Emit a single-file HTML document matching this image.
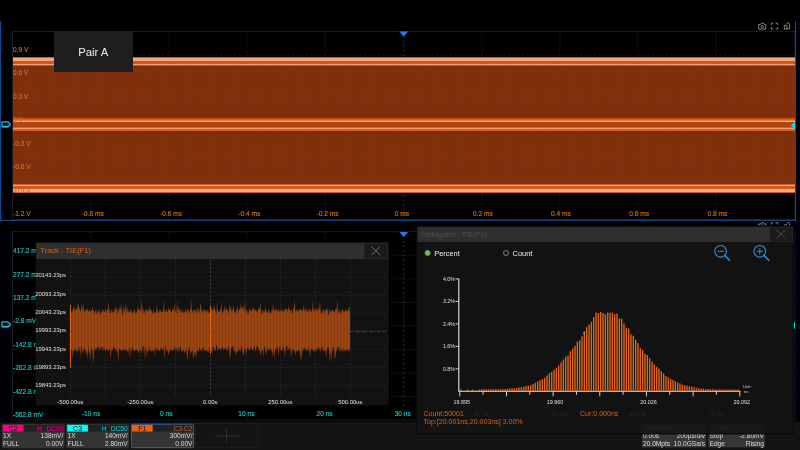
<!DOCTYPE html>
<html><head><meta charset="utf-8"><title>Oscilloscope</title>
<style>
html,body{margin:0;padding:0;background:#000;overflow:hidden}
svg{display:block;will-change:transform;opacity:0.999}
text{font-family:"Liberation Sans",sans-serif}
</style></head><body>
<svg width="800" height="450" viewBox="0 0 800 450">
<rect width="800" height="450" fill="#000"/>

<g id="top">
<rect x="1" y="31.5" width="11.5" height="189" fill="#010109"/>
<rect x="796" y="21" width="4" height="401" fill="#01010b"/>
<rect x="12.5" y="31.5" width="782.5" height="188" fill="none" stroke="#1d1d1d" stroke-width="1"/>
<line x1="13" x2="795" y1="55.0" y2="55.0" stroke="#191919" stroke-width="1" stroke-dasharray="2.5 2"/>
<line x1="13" x2="795" y1="78.5" y2="78.5" stroke="#191919" stroke-width="1" stroke-dasharray="2.5 2"/>
<line x1="13" x2="795" y1="102.0" y2="102.0" stroke="#191919" stroke-width="1" stroke-dasharray="2.5 2"/>
<line x1="13" x2="795" y1="125.5" y2="125.5" stroke="#191919" stroke-width="1" stroke-dasharray="2.5 2"/>
<line x1="13" x2="795" y1="149.0" y2="149.0" stroke="#191919" stroke-width="1" stroke-dasharray="2.5 2"/>
<line x1="13" x2="795" y1="172.5" y2="172.5" stroke="#191919" stroke-width="1" stroke-dasharray="2.5 2"/>
<line x1="13" x2="795" y1="196.0" y2="196.0" stroke="#191919" stroke-width="1" stroke-dasharray="2.5 2"/>
<line y1="32" y2="219" x1="90.7" x2="90.7" stroke="#191919" stroke-width="1" stroke-dasharray="2.5 2"/>
<line y1="32" y2="219" x1="168.9" x2="168.9" stroke="#191919" stroke-width="1" stroke-dasharray="2.5 2"/>
<line y1="32" y2="219" x1="247.1" x2="247.1" stroke="#191919" stroke-width="1" stroke-dasharray="2.5 2"/>
<line y1="32" y2="219" x1="325.3" x2="325.3" stroke="#191919" stroke-width="1" stroke-dasharray="2.5 2"/>
<line y1="32" y2="219" x1="403.5" x2="403.5" stroke="#191919" stroke-width="1" stroke-dasharray="2.5 2"/>
<line y1="32" y2="219" x1="481.7" x2="481.7" stroke="#191919" stroke-width="1" stroke-dasharray="2.5 2"/>
<line y1="32" y2="219" x1="559.9" x2="559.9" stroke="#191919" stroke-width="1" stroke-dasharray="2.5 2"/>
<line y1="32" y2="219" x1="638.1" x2="638.1" stroke="#191919" stroke-width="1" stroke-dasharray="2.5 2"/>
<line y1="32" y2="219" x1="716.3" x2="716.3" stroke="#191919" stroke-width="1" stroke-dasharray="2.5 2"/>
<line x1="402.7" x2="404.7" y1="31.5" y2="31.5" stroke="#303030" stroke-width="0.8"/>
<line x1="402.7" x2="404.7" y1="36.2" y2="36.2" stroke="#303030" stroke-width="0.8"/>
<line x1="402.7" x2="404.7" y1="40.9" y2="40.9" stroke="#303030" stroke-width="0.8"/>
<line x1="402.7" x2="404.7" y1="45.6" y2="45.6" stroke="#303030" stroke-width="0.8"/>
<line x1="402.7" x2="404.7" y1="50.3" y2="50.3" stroke="#303030" stroke-width="0.8"/>
<line x1="402.7" x2="404.7" y1="55.0" y2="55.0" stroke="#303030" stroke-width="0.8"/>
<line x1="402.7" x2="404.7" y1="59.7" y2="59.7" stroke="#303030" stroke-width="0.8"/>
<line x1="402.7" x2="404.7" y1="64.4" y2="64.4" stroke="#303030" stroke-width="0.8"/>
<line x1="402.7" x2="404.7" y1="69.1" y2="69.1" stroke="#303030" stroke-width="0.8"/>
<line x1="402.7" x2="404.7" y1="73.8" y2="73.8" stroke="#303030" stroke-width="0.8"/>
<line x1="402.7" x2="404.7" y1="78.5" y2="78.5" stroke="#303030" stroke-width="0.8"/>
<line x1="402.7" x2="404.7" y1="83.2" y2="83.2" stroke="#303030" stroke-width="0.8"/>
<line x1="402.7" x2="404.7" y1="87.9" y2="87.9" stroke="#303030" stroke-width="0.8"/>
<line x1="402.7" x2="404.7" y1="92.6" y2="92.6" stroke="#303030" stroke-width="0.8"/>
<line x1="402.7" x2="404.7" y1="97.3" y2="97.3" stroke="#303030" stroke-width="0.8"/>
<line x1="402.7" x2="404.7" y1="102.0" y2="102.0" stroke="#303030" stroke-width="0.8"/>
<line x1="402.7" x2="404.7" y1="106.7" y2="106.7" stroke="#303030" stroke-width="0.8"/>
<line x1="402.7" x2="404.7" y1="111.4" y2="111.4" stroke="#303030" stroke-width="0.8"/>
<line x1="402.7" x2="404.7" y1="116.1" y2="116.1" stroke="#303030" stroke-width="0.8"/>
<line x1="402.7" x2="404.7" y1="120.8" y2="120.8" stroke="#303030" stroke-width="0.8"/>
<line x1="402.7" x2="404.7" y1="125.5" y2="125.5" stroke="#303030" stroke-width="0.8"/>
<line x1="402.7" x2="404.7" y1="130.2" y2="130.2" stroke="#303030" stroke-width="0.8"/>
<line x1="402.7" x2="404.7" y1="134.9" y2="134.9" stroke="#303030" stroke-width="0.8"/>
<line x1="402.7" x2="404.7" y1="139.6" y2="139.6" stroke="#303030" stroke-width="0.8"/>
<line x1="402.7" x2="404.7" y1="144.3" y2="144.3" stroke="#303030" stroke-width="0.8"/>
<line x1="402.7" x2="404.7" y1="149.0" y2="149.0" stroke="#303030" stroke-width="0.8"/>
<line x1="402.7" x2="404.7" y1="153.7" y2="153.7" stroke="#303030" stroke-width="0.8"/>
<line x1="402.7" x2="404.7" y1="158.4" y2="158.4" stroke="#303030" stroke-width="0.8"/>
<line x1="402.7" x2="404.7" y1="163.1" y2="163.1" stroke="#303030" stroke-width="0.8"/>
<line x1="402.7" x2="404.7" y1="167.8" y2="167.8" stroke="#303030" stroke-width="0.8"/>
<line x1="402.7" x2="404.7" y1="172.5" y2="172.5" stroke="#303030" stroke-width="0.8"/>
<line x1="402.7" x2="404.7" y1="177.2" y2="177.2" stroke="#303030" stroke-width="0.8"/>
<line x1="402.7" x2="404.7" y1="181.9" y2="181.9" stroke="#303030" stroke-width="0.8"/>
<line x1="402.7" x2="404.7" y1="186.6" y2="186.6" stroke="#303030" stroke-width="0.8"/>
<line x1="402.7" x2="404.7" y1="191.3" y2="191.3" stroke="#303030" stroke-width="0.8"/>
<line x1="402.7" x2="404.7" y1="196.0" y2="196.0" stroke="#303030" stroke-width="0.8"/>
<line x1="402.7" x2="404.7" y1="200.7" y2="200.7" stroke="#303030" stroke-width="0.8"/>
<line x1="402.7" x2="404.7" y1="205.4" y2="205.4" stroke="#303030" stroke-width="0.8"/>
<line x1="402.7" x2="404.7" y1="210.1" y2="210.1" stroke="#303030" stroke-width="0.8"/>
<line x1="402.7" x2="404.7" y1="214.8" y2="214.8" stroke="#303030" stroke-width="0.8"/>
<line x1="402.7" x2="404.7" y1="219.5" y2="219.5" stroke="#303030" stroke-width="0.8"/>
<rect x="13" y="57.2" width="782" height="135.80" fill="#7f300c"/>
<defs><pattern id="tx" width="3.4" height="4.6" patternUnits="userSpaceOnUse"><rect x="0.4" y="0.6" width="1.5" height="3" rx="0.7" fill="#a04616" opacity="0.16"/><rect x="2.2" y="2.8" width="1" height="1.6" fill="#5a1e04" opacity="0.14"/></pattern></defs>
<rect x="13" y="66" width="782" height="118" fill="url(#tx)"/>
<rect x="13" y="57.2" width="782" height="0.50" fill="#d86428"/>
<rect x="13" y="57.7" width="782" height="3.30" fill="#f6a882"/>
<rect x="13" y="61" width="782" height="2.90" fill="#d4581a"/>
<rect x="13" y="63.9" width="782" height="1.40" fill="#f4a27a"/>
<rect x="13" y="65.3" width="782" height="0.70" fill="#c8541a"/>
<rect x="13" y="118.4" width="782" height="12.50" fill="#e85c18"/>
<rect x="13" y="120.6" width="782" height="1.50" fill="#f4a880"/>
<rect x="13" y="122.1" width="782" height="5.60" fill="#ad4710"/>
<rect x="13" y="127.7" width="782" height="1.40" fill="#f0a078"/>
<rect x="13" y="183.9" width="782" height="0.90" fill="#d05a1c"/>
<rect x="13" y="184.8" width="782" height="1.30" fill="#f6b08c"/>
<rect x="13" y="186.1" width="782" height="2.90" fill="#d85a1a"/>
<rect x="13" y="189" width="782" height="3.30" fill="#f6a882"/>
<rect x="13" y="192.3" width="782" height="0.70" fill="#d86428"/>
<text x="13" y="51.9" font-size="6.6" fill="#d27030" stroke="#d27030" stroke-width="0.15">0.9 V</text>
<text x="13" y="75.3" font-size="6.6" fill="#d27030" stroke="#d27030" stroke-width="0.15">0.6 V</text>
<text x="13" y="98.8" font-size="6.6" fill="#d27030" stroke="#d27030" stroke-width="0.15">0.3 V</text>
<text x="13" y="122.2" font-size="6.6" fill="#d27030" stroke="#d27030" stroke-width="0.15">0 V</text>
<text x="13" y="145.7" font-size="6.6" fill="#d27030" stroke="#d27030" stroke-width="0.15">-0.3 V</text>
<text x="13" y="169.2" font-size="6.6" fill="#d27030" stroke="#d27030" stroke-width="0.15">-0.6 V</text>
<text x="13" y="192.6" font-size="6.6" fill="#d27030" stroke="#d27030" stroke-width="0.15">-0.9 V</text>
<text x="13" y="216.1" font-size="6.6" fill="#d27030" stroke="#d27030" stroke-width="0.15">-1.2 V</text>
<text x="81.9" y="215.6" font-size="6.6" fill="#d27030" stroke="#d27030" stroke-width="0.15">-0.8 ms</text>
<text x="160.1" y="215.6" font-size="6.6" fill="#d27030" stroke="#d27030" stroke-width="0.15">-0.6 ms</text>
<text x="238.3" y="215.6" font-size="6.6" fill="#d27030" stroke="#d27030" stroke-width="0.15">-0.4 ms</text>
<text x="316.5" y="215.6" font-size="6.6" fill="#d27030" stroke="#d27030" stroke-width="0.15">-0.2 ms</text>
<text x="394.7" y="215.6" font-size="6.6" fill="#d27030" stroke="#d27030" stroke-width="0.15">0 ms</text>
<text x="472.9" y="215.6" font-size="6.6" fill="#d27030" stroke="#d27030" stroke-width="0.15">0.2 ms</text>
<text x="551.1" y="215.6" font-size="6.6" fill="#d27030" stroke="#d27030" stroke-width="0.15">0.4 ms</text>
<text x="629.3" y="215.6" font-size="6.6" fill="#d27030" stroke="#d27030" stroke-width="0.15">0.6 ms</text>
<text x="707.5" y="215.6" font-size="6.6" fill="#d27030" stroke="#d27030" stroke-width="0.15">0.8 ms</text>
<rect x="54" y="31" width="79" height="41" fill="#1f1f1f"/>
<text x="93.3" y="56.2" font-size="11.3" fill="#f2f2f2" text-anchor="middle">Pair A</text>
<polygon points="399.3,31.5 408.2,31.5 403.7,36.8" fill="#2b78ee"/>
<polygon points="795,121.8 795,129 790.8,125.4" fill="#00e5e5"/>
<g transform="translate(0,124.2)"><path d="M2.2,-2.3 h5.6 l2.4,2.3 l-2.4,2.3 h-5.6 z" fill="none" stroke="#b01078" stroke-width="1.1" transform="translate(0.3,0.9)"/>
<path d="M2,-2.4 h5.8 l2.6,2.4 l-2.6,2.4 h-5.8 z" fill="#03030c" stroke="#22c4d4" stroke-width="1.2" stroke-linejoin="round"/>
<text x="3" y="1.6" font-size="4.4" fill="#0a6068">C3</text></g>
<rect x="0" y="21" width="1.1" height="200" fill="#184a8e"/>
<rect x="795" y="21" width="1.1" height="200" fill="#184a8e"/>
<rect x="0" y="219.8" width="796.1" height="1.1" fill="#184a8e"/>
<g transform="translate(0,0)" fill="none" stroke="#b4b4b4" stroke-width="0.75">
<path d="M758.7,24.5 h1.8 l0.9,-1.3 h2.2 l0.9,1.3 h1.3 v4.6 h-7.1 z"/><circle cx="762.3" cy="26.6" r="1.2"/>
<path d="M771.3,25 v-1.8 h2 M775.6,23.2 h2 v1.8 M777.6,27.2 v1.8 h-2 M773.3,29 h-2 v-1.8"/>
<path d="M784.3,25.3 h2.6 v3.8 h-2.6 z M787,28.9 h2.6 v-4.2 c0,-2.4 -2.6,-2.4 -2.6,-0.6"/>
</g>
</g>
<g id="low">
<rect x="0" y="232" width="12.5" height="189" fill="#010109"/>
<g transform="translate(0,199.5)" fill="none" stroke="#b4b4b4" stroke-width="0.75">
<path d="M758.7,24.5 h1.8 l0.9,-1.3 h2.2 l0.9,1.3 h1.3 v4.6 h-7.1 z"/><circle cx="762.3" cy="26.6" r="1.2"/>
<path d="M771.3,25 v-1.8 h2 M775.6,23.2 h2 v1.8 M777.6,27.2 v1.8 h-2 M773.3,29 h-2 v-1.8"/>
<path d="M784.3,25.3 h2.6 v3.8 h-2.6 z M787,28.9 h2.6 v-4.2 c0,-2.4 -2.6,-2.4 -2.6,-0.6"/>
</g>
<rect x="12.5" y="231.7" width="782.5" height="188.4" fill="none" stroke="#1d1d1d" stroke-width="1"/>
<line x1="13" x2="795" y1="255.2" y2="255.2" stroke="#191919" stroke-width="1" stroke-dasharray="2.5 2"/>
<line x1="13" x2="795" y1="278.8" y2="278.8" stroke="#191919" stroke-width="1" stroke-dasharray="2.5 2"/>
<line x1="13" x2="795" y1="302.4" y2="302.4" stroke="#191919" stroke-width="1" stroke-dasharray="2.5 2"/>
<line x1="13" x2="795" y1="325.9" y2="325.9" stroke="#191919" stroke-width="1" stroke-dasharray="2.5 2"/>
<line x1="13" x2="795" y1="349.4" y2="349.4" stroke="#191919" stroke-width="1" stroke-dasharray="2.5 2"/>
<line x1="13" x2="795" y1="373.0" y2="373.0" stroke="#191919" stroke-width="1" stroke-dasharray="2.5 2"/>
<line x1="13" x2="795" y1="396.5" y2="396.5" stroke="#191919" stroke-width="1" stroke-dasharray="2.5 2"/>
<line y1="232" y2="420" x1="90.7" x2="90.7" stroke="#191919" stroke-width="1" stroke-dasharray="2.5 2"/>
<line y1="232" y2="420" x1="168.9" x2="168.9" stroke="#191919" stroke-width="1" stroke-dasharray="2.5 2"/>
<line y1="232" y2="420" x1="247.1" x2="247.1" stroke="#191919" stroke-width="1" stroke-dasharray="2.5 2"/>
<line y1="232" y2="420" x1="325.3" x2="325.3" stroke="#191919" stroke-width="1" stroke-dasharray="2.5 2"/>
<line y1="232" y2="420" x1="403.5" x2="403.5" stroke="#191919" stroke-width="1" stroke-dasharray="2.5 2"/>
<line y1="232" y2="420" x1="481.7" x2="481.7" stroke="#191919" stroke-width="1" stroke-dasharray="2.5 2"/>
<line y1="232" y2="420" x1="559.9" x2="559.9" stroke="#191919" stroke-width="1" stroke-dasharray="2.5 2"/>
<line y1="232" y2="420" x1="638.1" x2="638.1" stroke="#191919" stroke-width="1" stroke-dasharray="2.5 2"/>
<line y1="232" y2="420" x1="716.3" x2="716.3" stroke="#191919" stroke-width="1" stroke-dasharray="2.5 2"/>
<line x1="402.7" x2="404.7" y1="232.0" y2="232.0" stroke="#303030" stroke-width="0.8"/>
<line x1="402.7" x2="404.7" y1="236.7" y2="236.7" stroke="#303030" stroke-width="0.8"/>
<line x1="402.7" x2="404.7" y1="241.4" y2="241.4" stroke="#303030" stroke-width="0.8"/>
<line x1="402.7" x2="404.7" y1="246.1" y2="246.1" stroke="#303030" stroke-width="0.8"/>
<line x1="402.7" x2="404.7" y1="250.8" y2="250.8" stroke="#303030" stroke-width="0.8"/>
<line x1="402.7" x2="404.7" y1="255.5" y2="255.5" stroke="#303030" stroke-width="0.8"/>
<line x1="402.7" x2="404.7" y1="260.2" y2="260.2" stroke="#303030" stroke-width="0.8"/>
<line x1="402.7" x2="404.7" y1="264.9" y2="264.9" stroke="#303030" stroke-width="0.8"/>
<line x1="402.7" x2="404.7" y1="269.6" y2="269.6" stroke="#303030" stroke-width="0.8"/>
<line x1="402.7" x2="404.7" y1="274.3" y2="274.3" stroke="#303030" stroke-width="0.8"/>
<line x1="402.7" x2="404.7" y1="279.0" y2="279.0" stroke="#303030" stroke-width="0.8"/>
<line x1="402.7" x2="404.7" y1="283.7" y2="283.7" stroke="#303030" stroke-width="0.8"/>
<line x1="402.7" x2="404.7" y1="288.4" y2="288.4" stroke="#303030" stroke-width="0.8"/>
<line x1="402.7" x2="404.7" y1="293.1" y2="293.1" stroke="#303030" stroke-width="0.8"/>
<line x1="402.7" x2="404.7" y1="297.8" y2="297.8" stroke="#303030" stroke-width="0.8"/>
<line x1="402.7" x2="404.7" y1="302.5" y2="302.5" stroke="#303030" stroke-width="0.8"/>
<line x1="402.7" x2="404.7" y1="307.2" y2="307.2" stroke="#303030" stroke-width="0.8"/>
<line x1="402.7" x2="404.7" y1="311.9" y2="311.9" stroke="#303030" stroke-width="0.8"/>
<line x1="402.7" x2="404.7" y1="316.6" y2="316.6" stroke="#303030" stroke-width="0.8"/>
<line x1="402.7" x2="404.7" y1="321.3" y2="321.3" stroke="#303030" stroke-width="0.8"/>
<line x1="402.7" x2="404.7" y1="326.0" y2="326.0" stroke="#303030" stroke-width="0.8"/>
<line x1="402.7" x2="404.7" y1="330.7" y2="330.7" stroke="#303030" stroke-width="0.8"/>
<line x1="402.7" x2="404.7" y1="335.4" y2="335.4" stroke="#303030" stroke-width="0.8"/>
<line x1="402.7" x2="404.7" y1="340.1" y2="340.1" stroke="#303030" stroke-width="0.8"/>
<line x1="402.7" x2="404.7" y1="344.8" y2="344.8" stroke="#303030" stroke-width="0.8"/>
<line x1="402.7" x2="404.7" y1="349.5" y2="349.5" stroke="#303030" stroke-width="0.8"/>
<line x1="402.7" x2="404.7" y1="354.2" y2="354.2" stroke="#303030" stroke-width="0.8"/>
<line x1="402.7" x2="404.7" y1="358.9" y2="358.9" stroke="#303030" stroke-width="0.8"/>
<line x1="402.7" x2="404.7" y1="363.6" y2="363.6" stroke="#303030" stroke-width="0.8"/>
<line x1="402.7" x2="404.7" y1="368.3" y2="368.3" stroke="#303030" stroke-width="0.8"/>
<line x1="402.7" x2="404.7" y1="373.0" y2="373.0" stroke="#303030" stroke-width="0.8"/>
<line x1="402.7" x2="404.7" y1="377.7" y2="377.7" stroke="#303030" stroke-width="0.8"/>
<line x1="402.7" x2="404.7" y1="382.4" y2="382.4" stroke="#303030" stroke-width="0.8"/>
<line x1="402.7" x2="404.7" y1="387.1" y2="387.1" stroke="#303030" stroke-width="0.8"/>
<line x1="402.7" x2="404.7" y1="391.8" y2="391.8" stroke="#303030" stroke-width="0.8"/>
<line x1="402.7" x2="404.7" y1="396.5" y2="396.5" stroke="#303030" stroke-width="0.8"/>
<line x1="402.7" x2="404.7" y1="401.2" y2="401.2" stroke="#303030" stroke-width="0.8"/>
<line x1="402.7" x2="404.7" y1="405.9" y2="405.9" stroke="#303030" stroke-width="0.8"/>
<line x1="402.7" x2="404.7" y1="410.6" y2="410.6" stroke="#303030" stroke-width="0.8"/>
<line x1="402.7" x2="404.7" y1="415.3" y2="415.3" stroke="#303030" stroke-width="0.8"/>
<polygon points="399.3,232 408.2,232 403.7,237" fill="#2b78ee"/>
<text x="13" y="253.1" font-size="6.6" fill="#1cbcbc" stroke="#1cbcbc" stroke-width="0.2">417.2 mV</text>
<text x="13" y="276.6" font-size="6.6" fill="#1cbcbc" stroke="#1cbcbc" stroke-width="0.2">277.2 mV</text>
<text x="13" y="300.0" font-size="6.6" fill="#1cbcbc" stroke="#1cbcbc" stroke-width="0.2">137.2 mV</text>
<text x="13" y="323.4" font-size="6.6" fill="#1cbcbc" stroke="#1cbcbc" stroke-width="0.2">-2.8 mV</text>
<text x="13" y="346.9" font-size="6.6" fill="#1cbcbc" stroke="#1cbcbc" stroke-width="0.2">-142.8 mV</text>
<text x="13" y="370.4" font-size="6.6" fill="#1cbcbc" stroke="#1cbcbc" stroke-width="0.2">-282.8 mV</text>
<text x="13" y="393.8" font-size="6.6" fill="#1cbcbc" stroke="#1cbcbc" stroke-width="0.2">-422.8 mV</text>
<text x="13" y="417.2" font-size="6.6" fill="#1cbcbc" stroke="#1cbcbc" stroke-width="0.2">-562.8 mV</text>
<text x="81.9" y="416.3" font-size="6.6" fill="#1cbcbc" stroke="#1cbcbc" stroke-width="0.2">-10 ns</text>
<text x="160.1" y="416.3" font-size="6.6" fill="#1cbcbc" stroke="#1cbcbc" stroke-width="0.2">0 ns</text>
<text x="238.3" y="416.3" font-size="6.6" fill="#1cbcbc" stroke="#1cbcbc" stroke-width="0.2">10 ns</text>
<text x="316.5" y="416.3" font-size="6.6" fill="#1cbcbc" stroke="#1cbcbc" stroke-width="0.2">20 ns</text>
<text x="394.7" y="416.3" font-size="6.6" fill="#1cbcbc" stroke="#1cbcbc" stroke-width="0.2">30 ns</text>
<text x="472.9" y="416.3" font-size="6.6" fill="#1cbcbc" stroke="#1cbcbc" stroke-width="0.2">40 ns</text>
<text x="551.1" y="416.3" font-size="6.6" fill="#1cbcbc" stroke="#1cbcbc" stroke-width="0.2">50 ns</text>
<text x="629.3" y="416.3" font-size="6.6" fill="#1cbcbc" stroke="#1cbcbc" stroke-width="0.2">60 ns</text>
<text x="707.5" y="416.3" font-size="6.6" fill="#1cbcbc" stroke="#1cbcbc" stroke-width="0.2">70 ns</text>
<g transform="translate(0,324.3)"><path d="M2.2,-2.3 h5.6 l2.4,2.3 l-2.4,2.3 h-5.6 z" fill="none" stroke="#b01078" stroke-width="1.1" transform="translate(0.3,0.9)"/>
<path d="M2,-2.4 h5.8 l2.6,2.4 l-2.6,2.4 h-5.8 z" fill="#03030c" stroke="#22c4d4" stroke-width="1.2" stroke-linejoin="round"/>
<text x="3" y="1.6" font-size="4.4" fill="#0a6068">C3</text></g>
<polygon points="795,321.8 795,329 790.8,325.4" fill="#00e5e5"/>
</g>
<g id="bar" font-size="6.6">
<rect x="0" y="421.9" width="800" height="28.1" fill="#151515"/>
<rect x="1.8" y="424" width="62.8" height="24.2" rx="1.2" fill="#363636"/>
<rect x="2.8" y="424.8" width="60.8" height="6.8" fill="#222222"/>
<rect x="2.8" y="424.8" width="20.7" height="6.8" fill="#ff0080"/>
<text x="13.200000000000001" y="430.8" font-size="7" fill="#111" text-anchor="middle">C2</text>
<text x="42.099999999999994" y="430.7" fill="#d80070" stroke="#d80070" stroke-width="0.2" text-anchor="end">H</text>
<text x="63.3" y="430.7" fill="#d80070" stroke="#d80070" stroke-width="0.2" text-anchor="end">DC50</text>
<text x="3.1" y="437.8" fill="#dedede">1X</text>
<text x="63.3" y="437.8" fill="#dedede" text-anchor="end">138mV/</text>
<text x="3.1" y="445.7" fill="#dedede">FULL</text>
<text x="63.3" y="445.7" fill="#dedede" text-anchor="end">0.00V</text>
<rect x="66.2" y="424" width="62.8" height="24.2" rx="1.2" fill="#363636"/>
<rect x="67.2" y="424.8" width="60.8" height="6.8" fill="#222222"/>
<rect x="67.2" y="424.8" width="20.7" height="6.8" fill="#00ffff"/>
<text x="77.60000000000001" y="430.8" font-size="7" fill="#111" text-anchor="middle">C3</text>
<text x="106.5" y="430.7" fill="#10b8c0" stroke="#10b8c0" stroke-width="0.2" text-anchor="end">H</text>
<text x="127.7" y="430.7" fill="#10b8c0" stroke="#10b8c0" stroke-width="0.2" text-anchor="end">DC50</text>
<text x="67.5" y="437.8" fill="#dedede">1X</text>
<text x="127.7" y="437.8" fill="#dedede" text-anchor="end">140mV/</text>
<text x="67.5" y="445.7" fill="#dedede">FULL</text>
<text x="127.7" y="445.7" fill="#dedede" text-anchor="end">2.80mV</text>
<rect x="131" y="424" width="62.8" height="24.2" rx="1.2" fill="#363636"/>
<rect x="132" y="424.8" width="60.8" height="6.8" fill="#222222"/>
<rect x="132" y="424.8" width="20.7" height="6.8" fill="#ee5f12"/>
<text x="142.4" y="430.8" font-size="7" fill="#111" text-anchor="middle">F1</text>
<text x="192.5" y="430.7" fill="#dc6418" text-anchor="end">C3-C2</text>
<text x="132.3" y="437.8" fill="#dedede"></text>
<text x="192.5" y="437.8" fill="#dedede" text-anchor="end">300mV/</text>
<text x="132.3" y="445.7" fill="#dedede"></text>
<text x="192.5" y="445.7" fill="#dedede" text-anchor="end">0.00V</text>
<rect x="131.4" y="424.1" width="62.2" height="23.5" rx="1" fill="none" stroke="#2468c0" stroke-width="0.9"/>
<rect x="195.6" y="423.3" width="62.2" height="24.2" fill="none" stroke="#2a2a2a" stroke-width="0.8" stroke-dasharray="2.5 1.5"/>
<path d="M215,436 h24 M226.5,429.2 v13.8" stroke="#323232" stroke-width="0.9" fill="none"/>
<rect x="642" y="424" width="64" height="23.4" fill="#373737"/>
<text x="644" y="430" fill="#9a9a9a">Timebase</text>
<text x="643" y="437.8" fill="#dedede">0.00s</text><text x="705" y="437.8" fill="#dedede" text-anchor="end">200µs/div</text>
<text x="643" y="445.8" fill="#dedede">20.0Mpts</text><text x="705" y="445.8" fill="#dedede" text-anchor="end">10.0GSa/s</text>
<rect x="708.2" y="424" width="56.7" height="23.4" fill="#373737"/>
<text x="710.3" y="430" fill="#10b0b8">Trigger</text><text x="763.5" y="430" fill="#10b0b8" text-anchor="end">C3 DC</text>
<text x="709.5" y="437.8" fill="#dedede">Stop</text><text x="764" y="437.8" fill="#dedede" text-anchor="end">-2.80mV</text>
<text x="709.5" y="445.8" fill="#dedede">Edge</text><text x="764" y="445.8" fill="#dedede" text-anchor="end">Rising</text>
</g>
<g id="track">
<rect x="35.6" y="242" width="353.2" height="163.6" fill="#141414" fill-opacity="0.95"/>
<rect x="36.2" y="243" width="328" height="16" fill="#303030"/>
<rect x="364.2" y="243" width="24.6" height="16" fill="#181818"/>
<rect x="364.7" y="243.6" width="22.3" height="14.9" fill="#1b1b1b" stroke="#2e2e2e" stroke-width="0.8"/>
<path d="M371.5,246.5 l8.5,8.5 M380,246.5 l-8.5,8.5" stroke="#7a7a7a" stroke-width="0.9" fill="none"/>
<text x="40.3" y="253.4" font-size="7.55" fill="#d86418">Track - TIE(F1)</text>
<line x1="70.5" x2="70.5" y1="259" y2="396" stroke="#2c2c2c" stroke-width="0.8" stroke-dasharray="2.5 1.5"/>
<line x1="105.5" x2="105.5" y1="259" y2="396" stroke="#2c2c2c" stroke-width="0.8" stroke-dasharray="2.5 1.5"/>
<line x1="140.5" x2="140.5" y1="259" y2="396" stroke="#2c2c2c" stroke-width="0.8" stroke-dasharray="2.5 1.5"/>
<line x1="175.5" x2="175.5" y1="259" y2="396" stroke="#2c2c2c" stroke-width="0.8" stroke-dasharray="2.5 1.5"/>
<line x1="210.5" x2="210.5" y1="259" y2="396" stroke="#484848" stroke-width="0.8" stroke-dasharray="2.5 1.5"/>
<line x1="245.5" x2="245.5" y1="259" y2="396" stroke="#2c2c2c" stroke-width="0.8" stroke-dasharray="2.5 1.5"/>
<line x1="280.5" x2="280.5" y1="259" y2="396" stroke="#2c2c2c" stroke-width="0.8" stroke-dasharray="2.5 1.5"/>
<line x1="315.5" x2="315.5" y1="259" y2="396" stroke="#2c2c2c" stroke-width="0.8" stroke-dasharray="2.5 1.5"/>
<line x1="350.5" x2="350.5" y1="259" y2="396" stroke="#2c2c2c" stroke-width="0.8" stroke-dasharray="2.5 1.5"/>
<line x1="70" x2="386" y1="277.3" y2="277.3" stroke="#272727" stroke-width="0.8" stroke-dasharray="2.5 1.5"/>
<line x1="70" x2="386" y1="295.3" y2="295.3" stroke="#272727" stroke-width="0.8" stroke-dasharray="2.5 1.5"/>
<line x1="70" x2="386" y1="313.3" y2="313.3" stroke="#272727" stroke-width="0.8" stroke-dasharray="2.5 1.5"/>
<line x1="70" x2="386" y1="331.3" y2="331.3" stroke="#272727" stroke-width="0.8" stroke-dasharray="2.5 1.5"/>
<line x1="70" x2="386" y1="349.3" y2="349.3" stroke="#272727" stroke-width="0.8" stroke-dasharray="2.5 1.5"/>
<line x1="70" x2="386" y1="367.3" y2="367.3" stroke="#272727" stroke-width="0.8" stroke-dasharray="2.5 1.5"/>
<line x1="70" x2="386" y1="385.3" y2="385.3" stroke="#272727" stroke-width="0.8" stroke-dasharray="2.5 1.5"/>
<polygon points="70.0,310.8 70.7,310.9 71.4,312.0 72.1,312.2 72.8,309.7 73.5,305.6 74.2,312.3 74.9,306.0 75.6,309.9 76.3,310.3 77.0,309.3 77.7,303.8 78.4,304.2 79.1,308.0 79.8,309.3 80.5,313.2 81.2,307.9 81.9,302.6 82.6,311.8 83.3,301.9 84.0,313.8 84.7,309.8 85.4,312.0 86.1,308.9 86.8,309.7 87.5,308.8 88.2,312.0 88.9,310.6 89.6,311.6 90.3,311.8 91.0,310.5 91.7,310.7 92.4,305.5 93.1,311.0 93.8,310.3 94.5,314.9 95.2,310.6 95.9,311.6 96.6,314.8 97.3,311.2 98.0,311.7 98.7,309.7 99.4,315.8 100.1,311.5 100.8,314.1 101.5,311.5 102.2,311.9 102.9,311.7 103.6,309.9 104.3,311.8 105.0,311.7 105.7,310.4 106.4,313.9 107.1,308.0 107.8,311.3 108.5,300.9 109.2,309.0 109.9,313.1 110.6,313.2 111.3,312.3 112.0,310.3 112.7,313.1 113.4,311.6 114.1,313.0 114.8,308.5 115.5,307.1 116.2,312.6 116.9,305.3 117.6,313.7 118.3,312.9 119.0,312.5 119.7,305.9 120.4,309.3 121.1,302.7 121.8,312.9 122.5,316.1 123.2,303.2 123.9,312.6 124.6,311.2 125.3,302.6 126.0,315.1 126.7,304.5 127.4,310.1 128.1,312.8 128.8,312.4 129.5,311.4 130.2,311.1 130.9,310.2 131.6,313.9 132.3,312.2 133.0,312.9 133.7,310.1 134.4,314.0 135.1,314.3 135.8,311.0 136.5,312.4 137.2,313.5 137.9,304.6 138.6,310.1 139.3,309.7 140.0,311.6 140.7,309.7 141.4,300.1 142.1,314.6 142.8,303.8 143.5,313.0 144.2,313.4 144.9,312.2 145.6,308.9 146.3,311.2 147.0,309.1 147.7,311.3 148.4,312.1 149.1,309.8 149.8,305.2 150.5,311.2 151.2,311.0 151.9,310.7 152.6,314.1 153.3,311.6 154.0,313.2 154.7,312.5 155.4,312.2 156.1,313.4 156.8,304.0 157.5,311.0 158.2,311.4 158.9,314.3 159.6,310.9 160.3,309.9 161.0,312.1 161.7,312.6 162.4,311.9 163.1,312.3 163.8,299.7 164.5,311.3 165.2,312.7 165.9,311.0 166.6,310.6 167.3,311.9 168.0,312.0 168.7,306.3 169.4,311.2 170.1,309.7 170.8,311.0 171.5,312.8 172.2,311.6 172.9,307.1 173.6,311.8 174.3,302.8 175.0,312.9 175.7,312.1 176.4,314.0 177.1,299.8 177.8,313.6 178.5,305.9 179.2,309.8 179.9,312.8 180.6,309.0 181.3,311.4 182.0,313.4 182.7,311.2 183.4,312.9 184.1,312.3 184.8,312.6 185.5,311.5 186.2,313.3 186.9,309.0 187.6,309.0 188.3,314.3 189.0,312.8 189.7,311.3 190.4,310.2 191.1,297.9 191.8,309.2 192.5,313.2 193.2,311.9 193.9,309.2 194.6,311.2 195.3,310.7 196.0,311.0 196.7,313.5 197.4,306.8 198.1,311.3 198.8,312.6 199.5,311.7 200.2,304.7 200.9,303.9 201.6,315.0 202.3,312.0 203.0,310.1 203.7,309.9 204.4,313.8 205.1,309.2 205.8,311.3 206.5,310.5 207.2,311.7 207.9,312.9 208.6,311.7 209.3,313.6 210.0,312.6 210.7,312.1 211.4,307.0 212.1,309.2 212.8,310.8 213.5,308.1 214.2,304.5 214.9,310.1 215.6,310.4 216.3,315.3 217.0,300.9 217.7,312.1 218.4,311.5 219.1,312.0 219.8,310.3 220.5,312.1 221.2,301.9 221.9,310.7 222.6,313.4 223.3,311.6 224.0,311.8 224.7,304.6 225.4,311.7 226.1,306.8 226.8,310.2 227.5,308.9 228.2,313.8 228.9,311.6 229.6,304.0 230.3,310.8 231.0,304.6 231.7,312.2 232.4,310.9 233.1,306.8 233.8,306.5 234.5,313.4 235.2,312.6 235.9,311.1 236.6,313.5 237.3,305.6 238.0,309.0 238.7,311.9 239.4,308.8 240.1,309.8 240.8,303.1 241.5,308.0 242.2,307.1 242.9,309.3 243.6,305.2 244.3,311.7 245.0,299.4 245.7,311.8 246.4,311.7 247.1,309.8 247.8,314.0 248.5,313.4 249.2,306.8 249.9,312.1 250.6,309.2 251.3,311.1 252.0,311.3 252.7,308.4 253.4,306.6 254.1,310.1 254.8,309.5 255.5,311.1 256.2,311.5 256.9,311.1 257.6,312.5 258.3,309.4 259.0,307.9 259.7,308.6 260.4,301.6 261.1,314.5 261.8,314.0 262.5,311.2 263.2,312.7 263.9,310.4 264.6,313.2 265.3,306.5 266.0,311.7 266.7,310.7 267.4,313.4 268.1,313.1 268.8,309.7 269.5,311.8 270.2,312.5 270.9,313.4 271.6,312.1 272.3,311.0 273.0,302.5 273.7,310.3 274.4,309.8 275.1,312.5 275.8,309.5 276.5,309.1 277.2,310.3 277.9,312.8 278.6,308.4 279.3,312.3 280.0,310.3 280.7,311.3 281.4,310.8 282.1,308.9 282.8,312.1 283.5,310.7 284.2,313.1 284.9,308.8 285.6,308.9 286.3,308.6 287.0,310.7 287.7,312.9 288.4,304.0 289.1,310.7 289.8,308.9 290.5,312.3 291.2,309.7 291.9,313.0 292.6,313.2 293.3,308.7 294.0,307.6 294.7,298.0 295.4,312.7 296.1,308.9 296.8,311.8 297.5,311.9 298.2,313.4 298.9,309.0 299.6,309.7 300.3,309.8 301.0,309.2 301.7,311.3 302.4,311.0 303.1,309.0 303.8,304.9 304.5,311.5 305.2,311.6 305.9,306.4 306.6,310.7 307.3,313.2 308.0,309.4 308.7,312.2 309.4,307.8 310.1,311.4 310.8,312.6 311.5,311.4 312.2,308.8 312.9,299.2 313.6,313.7 314.3,308.8 315.0,311.7 315.7,309.4 316.4,308.3 317.1,309.3 317.8,312.2 318.5,306.4 319.2,310.5 319.9,300.4 320.6,310.7 321.3,313.5 322.0,313.4 322.7,310.5 323.4,310.3 324.1,314.3 324.8,309.0 325.5,311.2 326.2,309.0 326.9,312.2 327.6,306.9 328.3,316.0 329.0,313.4 329.7,311.5 330.4,311.2 331.1,311.4 331.8,310.5 332.5,310.8 333.2,311.0 333.9,311.6 334.6,313.1 335.3,309.6 336.0,309.6 336.7,308.9 337.4,299.1 338.1,312.1 338.8,312.5 339.5,312.6 340.2,313.9 340.9,309.2 341.6,314.6 342.3,310.0 343.0,309.7 343.7,311.7 344.4,311.5 345.1,311.7 345.8,310.6 346.5,311.6 347.2,309.3 347.9,311.7 348.6,309.6 349.3,305.0 350.0,312.6 350.0,350.7 349.3,348.7 348.6,351.4 347.9,349.8 347.2,348.4 346.5,351.1 345.8,348.9 345.1,350.0 344.4,351.1 343.7,347.5 343.0,353.6 342.3,348.1 341.6,349.6 340.9,349.8 340.2,352.3 339.5,347.6 338.8,346.6 338.1,347.3 337.4,348.1 336.7,350.8 336.0,350.7 335.3,358.8 334.6,358.5 333.9,348.0 333.2,348.1 332.5,346.8 331.8,354.5 331.1,362.4 330.4,350.6 329.7,361.4 329.0,350.2 328.3,346.8 327.6,347.7 326.9,348.9 326.2,358.5 325.5,350.2 324.8,351.2 324.1,349.4 323.4,351.8 322.7,346.4 322.0,347.4 321.3,347.5 320.6,353.4 319.9,346.3 319.2,350.1 318.5,348.5 317.8,347.1 317.1,349.8 316.4,348.2 315.7,351.7 315.0,348.4 314.3,353.2 313.6,349.1 312.9,350.9 312.2,347.7 311.5,348.5 310.8,350.3 310.1,357.4 309.4,350.1 308.7,351.3 308.0,345.4 307.3,352.0 306.6,349.6 305.9,349.5 305.2,348.7 304.5,347.7 303.8,347.2 303.1,349.8 302.4,350.0 301.7,360.8 301.0,351.5 300.3,360.3 299.6,350.7 298.9,349.1 298.2,351.0 297.5,351.9 296.8,351.6 296.1,350.0 295.4,356.4 294.7,350.6 294.0,351.0 293.3,348.5 292.6,350.1 291.9,351.4 291.2,358.5 290.5,348.2 289.8,349.4 289.1,346.2 288.4,351.0 287.7,346.5 287.0,345.0 286.3,347.4 285.6,350.4 284.9,357.7 284.2,349.1 283.5,348.0 282.8,345.9 282.1,351.5 281.4,349.7 280.7,350.3 280.0,345.4 279.3,347.8 278.6,357.5 277.9,346.5 277.2,347.4 276.5,349.2 275.8,348.7 275.1,348.9 274.4,361.6 273.7,345.7 273.0,357.6 272.3,353.0 271.6,350.6 270.9,348.8 270.2,348.7 269.5,348.1 268.8,351.0 268.1,349.1 267.4,348.2 266.7,351.5 266.0,355.8 265.3,347.6 264.6,346.0 263.9,349.8 263.2,357.3 262.5,348.0 261.8,349.4 261.1,354.6 260.4,354.4 259.7,349.8 259.0,349.4 258.3,346.7 257.6,347.6 256.9,344.4 256.2,348.5 255.5,351.3 254.8,348.1 254.1,345.4 253.4,349.5 252.7,349.3 252.0,348.5 251.3,349.2 250.6,346.1 249.9,349.6 249.2,349.8 248.5,349.3 247.8,347.6 247.1,348.1 246.4,356.4 245.7,349.4 245.0,347.3 244.3,351.1 243.6,355.0 242.9,354.9 242.2,348.8 241.5,344.7 240.8,351.4 240.1,347.9 239.4,350.7 238.7,348.1 238.0,351.5 237.3,351.5 236.6,352.3 235.9,355.7 235.2,350.4 234.5,351.9 233.8,344.7 233.1,348.9 232.4,345.4 231.7,348.4 231.0,346.6 230.3,359.0 229.6,356.3 228.9,345.6 228.2,349.1 227.5,349.9 226.8,347.6 226.1,349.5 225.4,348.4 224.7,348.5 224.0,347.7 223.3,347.5 222.6,347.3 221.9,348.8 221.2,348.5 220.5,348.3 219.8,348.7 219.1,348.3 218.4,349.0 217.7,347.0 217.0,347.5 216.3,344.1 215.6,350.9 214.9,349.5 214.2,347.9 213.5,346.5 212.8,347.7 212.1,353.4 211.4,350.4 210.7,348.4 210.0,347.2 209.3,348.3 208.6,353.3 207.9,349.9 207.2,352.0 206.5,350.3 205.8,349.7 205.1,350.8 204.4,351.1 203.7,346.0 203.0,349.1 202.3,349.1 201.6,348.2 200.9,349.4 200.2,351.1 199.5,346.3 198.8,351.7 198.1,350.6 197.4,349.4 196.7,352.8 196.0,357.7 195.3,353.2 194.6,351.7 193.9,358.1 193.2,357.4 192.5,349.3 191.8,351.3 191.1,352.3 190.4,355.6 189.7,348.2 189.0,348.0 188.3,346.5 187.6,360.4 186.9,357.0 186.2,348.1 185.5,350.0 184.8,353.3 184.1,351.7 183.4,349.0 182.7,351.4 182.0,349.0 181.3,353.3 180.6,345.8 179.9,348.8 179.2,347.8 178.5,346.6 177.8,353.0 177.1,349.3 176.4,347.7 175.7,349.4 175.0,345.6 174.3,349.1 173.6,348.8 172.9,350.2 172.2,350.1 171.5,350.2 170.8,349.2 170.1,349.7 169.4,351.0 168.7,355.0 168.0,352.5 167.3,349.7 166.6,350.9 165.9,343.8 165.2,350.2 164.5,358.4 163.8,347.8 163.1,346.3 162.4,350.3 161.7,348.2 161.0,348.9 160.3,347.8 159.6,350.4 158.9,351.5 158.2,348.6 157.5,349.6 156.8,348.7 156.1,346.9 155.4,348.4 154.7,356.5 154.0,348.3 153.3,348.6 152.6,351.3 151.9,350.8 151.2,351.4 150.5,350.8 149.8,347.0 149.1,350.1 148.4,351.5 147.7,349.4 147.0,359.0 146.3,348.7 145.6,347.8 144.9,360.2 144.2,347.0 143.5,345.9 142.8,345.4 142.1,349.6 141.4,353.3 140.7,346.3 140.0,351.1 139.3,349.7 138.6,354.3 137.9,350.3 137.2,348.3 136.5,350.3 135.8,350.0 135.1,350.4 134.4,350.0 133.7,351.6 133.0,348.5 132.3,347.1 131.6,350.8 130.9,348.3 130.2,359.3 129.5,347.2 128.8,349.1 128.1,354.9 127.4,350.6 126.7,350.5 126.0,350.6 125.3,348.0 124.6,349.7 123.9,350.1 123.2,349.6 122.5,350.8 121.8,348.9 121.1,351.3 120.4,349.6 119.7,349.1 119.0,348.4 118.3,362.9 117.6,349.9 116.9,353.3 116.2,348.2 115.5,349.3 114.8,348.5 114.1,347.7 113.4,346.6 112.7,350.1 112.0,350.6 111.3,350.5 110.6,359.9 109.9,347.7 109.2,349.3 108.5,350.6 107.8,350.2 107.1,350.2 106.4,348.2 105.7,350.4 105.0,347.8 104.3,349.5 103.6,349.8 102.9,347.1 102.2,345.8 101.5,348.0 100.8,346.7 100.1,349.9 99.4,348.4 98.7,344.5 98.0,348.8 97.3,347.4 96.6,348.4 95.9,347.1 95.2,349.5 94.5,348.2 93.8,356.8 93.1,364.6 92.4,349.1 91.7,349.4 91.0,348.0 90.3,361.1 89.6,352.7 88.9,352.9 88.2,345.1 87.5,360.5 86.8,350.4 86.1,356.1 85.4,349.6 84.7,349.6 84.0,346.5 83.3,351.0 82.6,354.6 81.9,350.5 81.2,344.2 80.5,358.0 79.8,347.4 79.1,347.1 78.4,350.4 77.7,353.6 77.0,347.7 76.3,351.7 75.6,349.4 74.9,348.5 74.2,350.9 73.5,349.7 72.8,359.4 72.1,349.6 71.4,349.0 70.7,356.5 70.0,358.0" fill="#8e3f11"/>
<path d="M70.3,309.5V350.5M73.5,309.5V350.5M76.7,309.5V350.5M79.9,309.5V350.5M83.1,309.5V350.5M86.3,309.5V350.5M89.5,309.5V350.5M92.7,309.5V350.5M95.9,309.5V350.5M99.1,309.5V350.5M102.3,309.5V350.5M105.5,309.5V350.5M108.7,309.5V350.5M111.9,309.5V350.5M115.1,309.5V350.5M118.3,309.5V350.5M121.5,309.5V350.5M124.7,309.5V350.5M127.9,309.5V350.5M131.1,309.5V350.5M134.3,309.5V350.5M137.5,309.5V350.5M140.7,309.5V350.5M143.9,309.5V350.5M147.1,309.5V350.5M150.3,309.5V350.5M153.5,309.5V350.5M156.7,309.5V350.5M159.9,309.5V350.5M163.1,309.5V350.5M166.3,309.5V350.5M169.5,309.5V350.5M172.7,309.5V350.5M175.9,309.5V350.5M179.1,309.5V350.5M182.3,309.5V350.5M185.5,309.5V350.5M188.7,309.5V350.5M191.9,309.5V350.5M195.1,309.5V350.5M198.3,309.5V350.5M201.5,309.5V350.5M204.7,309.5V350.5M207.9,309.5V350.5M211.1,309.5V350.5M214.3,309.5V350.5M217.5,309.5V350.5M220.7,309.5V350.5M223.9,309.5V350.5M227.1,309.5V350.5M230.3,309.5V350.5M233.5,309.5V350.5M236.7,309.5V350.5M239.9,309.5V350.5M243.1,309.5V350.5M246.3,309.5V350.5M249.5,309.5V350.5M252.7,309.5V350.5M255.9,309.5V350.5M259.1,309.5V350.5M262.3,309.5V350.5M265.5,309.5V350.5M268.7,309.5V350.5M271.9,309.5V350.5M275.1,309.5V350.5M278.3,309.5V350.5M281.5,309.5V350.5M284.7,309.5V350.5M287.9,309.5V350.5M291.1,309.5V350.5M294.3,309.5V350.5M297.5,309.5V350.5M300.7,309.5V350.5M303.9,309.5V350.5M307.1,309.5V350.5M310.3,309.5V350.5M313.5,309.5V350.5M316.7,309.5V350.5M319.9,309.5V350.5M323.1,309.5V350.5M326.3,309.5V350.5M329.5,309.5V350.5M332.7,309.5V350.5M335.9,309.5V350.5M339.1,309.5V350.5M342.3,309.5V350.5M345.5,309.5V350.5M348.7,309.5V350.5" stroke="#c05717" stroke-width="1" fill="none" opacity="0.6"/>
<path d="M70.5,305V368 M210.5,306V354" stroke="#e86a1e" stroke-width="0.9" fill="none"/>
<line x1="70" x2="386" y1="331.3" y2="331.3" stroke="#6a4a3a" stroke-width="0.6" opacity="0.7"/>
<line x1="70.5" x2="70.5" y1="330.3" y2="332.3" stroke="#5a5a5a" stroke-width="0.7"/>
<line x1="77.5" x2="77.5" y1="330.3" y2="332.3" stroke="#5a5a5a" stroke-width="0.7"/>
<line x1="84.5" x2="84.5" y1="330.3" y2="332.3" stroke="#5a5a5a" stroke-width="0.7"/>
<line x1="91.5" x2="91.5" y1="330.3" y2="332.3" stroke="#5a5a5a" stroke-width="0.7"/>
<line x1="98.5" x2="98.5" y1="330.3" y2="332.3" stroke="#5a5a5a" stroke-width="0.7"/>
<line x1="105.5" x2="105.5" y1="330.3" y2="332.3" stroke="#5a5a5a" stroke-width="0.7"/>
<line x1="112.5" x2="112.5" y1="330.3" y2="332.3" stroke="#5a5a5a" stroke-width="0.7"/>
<line x1="119.5" x2="119.5" y1="330.3" y2="332.3" stroke="#5a5a5a" stroke-width="0.7"/>
<line x1="126.5" x2="126.5" y1="330.3" y2="332.3" stroke="#5a5a5a" stroke-width="0.7"/>
<line x1="133.5" x2="133.5" y1="330.3" y2="332.3" stroke="#5a5a5a" stroke-width="0.7"/>
<line x1="140.5" x2="140.5" y1="330.3" y2="332.3" stroke="#5a5a5a" stroke-width="0.7"/>
<line x1="147.5" x2="147.5" y1="330.3" y2="332.3" stroke="#5a5a5a" stroke-width="0.7"/>
<line x1="154.5" x2="154.5" y1="330.3" y2="332.3" stroke="#5a5a5a" stroke-width="0.7"/>
<line x1="161.5" x2="161.5" y1="330.3" y2="332.3" stroke="#5a5a5a" stroke-width="0.7"/>
<line x1="168.5" x2="168.5" y1="330.3" y2="332.3" stroke="#5a5a5a" stroke-width="0.7"/>
<line x1="175.5" x2="175.5" y1="330.3" y2="332.3" stroke="#5a5a5a" stroke-width="0.7"/>
<line x1="182.5" x2="182.5" y1="330.3" y2="332.3" stroke="#5a5a5a" stroke-width="0.7"/>
<line x1="189.5" x2="189.5" y1="330.3" y2="332.3" stroke="#5a5a5a" stroke-width="0.7"/>
<line x1="196.5" x2="196.5" y1="330.3" y2="332.3" stroke="#5a5a5a" stroke-width="0.7"/>
<line x1="203.5" x2="203.5" y1="330.3" y2="332.3" stroke="#5a5a5a" stroke-width="0.7"/>
<line x1="210.5" x2="210.5" y1="330.3" y2="332.3" stroke="#5a5a5a" stroke-width="0.7"/>
<line x1="217.5" x2="217.5" y1="330.3" y2="332.3" stroke="#5a5a5a" stroke-width="0.7"/>
<line x1="224.5" x2="224.5" y1="330.3" y2="332.3" stroke="#5a5a5a" stroke-width="0.7"/>
<line x1="231.5" x2="231.5" y1="330.3" y2="332.3" stroke="#5a5a5a" stroke-width="0.7"/>
<line x1="238.5" x2="238.5" y1="330.3" y2="332.3" stroke="#5a5a5a" stroke-width="0.7"/>
<line x1="245.5" x2="245.5" y1="330.3" y2="332.3" stroke="#5a5a5a" stroke-width="0.7"/>
<line x1="252.5" x2="252.5" y1="330.3" y2="332.3" stroke="#5a5a5a" stroke-width="0.7"/>
<line x1="259.5" x2="259.5" y1="330.3" y2="332.3" stroke="#5a5a5a" stroke-width="0.7"/>
<line x1="266.5" x2="266.5" y1="330.3" y2="332.3" stroke="#5a5a5a" stroke-width="0.7"/>
<line x1="273.5" x2="273.5" y1="330.3" y2="332.3" stroke="#5a5a5a" stroke-width="0.7"/>
<line x1="280.5" x2="280.5" y1="330.3" y2="332.3" stroke="#5a5a5a" stroke-width="0.7"/>
<line x1="287.5" x2="287.5" y1="330.3" y2="332.3" stroke="#5a5a5a" stroke-width="0.7"/>
<line x1="294.5" x2="294.5" y1="330.3" y2="332.3" stroke="#5a5a5a" stroke-width="0.7"/>
<line x1="301.5" x2="301.5" y1="330.3" y2="332.3" stroke="#5a5a5a" stroke-width="0.7"/>
<line x1="308.5" x2="308.5" y1="330.3" y2="332.3" stroke="#5a5a5a" stroke-width="0.7"/>
<line x1="315.5" x2="315.5" y1="330.3" y2="332.3" stroke="#5a5a5a" stroke-width="0.7"/>
<line x1="322.5" x2="322.5" y1="330.3" y2="332.3" stroke="#5a5a5a" stroke-width="0.7"/>
<line x1="329.5" x2="329.5" y1="330.3" y2="332.3" stroke="#5a5a5a" stroke-width="0.7"/>
<line x1="336.5" x2="336.5" y1="330.3" y2="332.3" stroke="#5a5a5a" stroke-width="0.7"/>
<line x1="343.5" x2="343.5" y1="330.3" y2="332.3" stroke="#5a5a5a" stroke-width="0.7"/>
<line x1="350.5" x2="350.5" y1="330.3" y2="332.3" stroke="#5a5a5a" stroke-width="0.7"/>
<line x1="357.5" x2="357.5" y1="330.3" y2="332.3" stroke="#5a5a5a" stroke-width="0.7"/>
<line x1="364.5" x2="364.5" y1="330.3" y2="332.3" stroke="#5a5a5a" stroke-width="0.7"/>
<line x1="371.5" x2="371.5" y1="330.3" y2="332.3" stroke="#5a5a5a" stroke-width="0.7"/>
<line x1="378.5" x2="378.5" y1="330.3" y2="332.3" stroke="#5a5a5a" stroke-width="0.7"/>
<line x1="385.5" x2="385.5" y1="330.3" y2="332.3" stroke="#5a5a5a" stroke-width="0.7"/>
<text x="35.2" y="277.2" font-size="5.9" fill="#e2e2e2">20143.23ps</text>
<text x="35.2" y="295.6" font-size="5.9" fill="#e2e2e2">20093.23ps</text>
<text x="35.2" y="313.9" font-size="5.9" fill="#e2e2e2">20043.23ps</text>
<text x="35.2" y="332.2" font-size="5.9" fill="#e2e2e2">19993.23ps</text>
<text x="35.2" y="350.6" font-size="5.9" fill="#e2e2e2">19943.23ps</text>
<text x="35.2" y="368.9" font-size="5.9" fill="#e2e2e2">19893.23ps</text>
<text x="35.2" y="387.3" font-size="5.9" fill="#e2e2e2">19843.23ps</text>
<text x="70.3" y="404.4" font-size="5.9" fill="#e2e2e2" text-anchor="middle">-500.00us</text>
<text x="140.3" y="404.4" font-size="5.9" fill="#e2e2e2" text-anchor="middle">-250.00us</text>
<text x="210.3" y="404.4" font-size="5.9" fill="#e2e2e2" text-anchor="middle">0.00s</text>
<text x="280.3" y="404.4" font-size="5.9" fill="#e2e2e2" text-anchor="middle">250.00us</text>
<text x="350.3" y="404.4" font-size="5.9" fill="#e2e2e2" text-anchor="middle">500.00us</text>
</g>
<g id="hist">
<rect x="416.3" y="225.5" width="377.6" height="208.8" fill="#151515" fill-opacity="0.9"/>
<rect x="416.8" y="226" width="376.6" height="207.8" fill="none" stroke="#0b0b0b" stroke-width="1"/>
<rect x="417.5" y="227" width="375.6" height="15" fill="#303030"/>
<rect x="770" y="227.3" width="22.5" height="14" fill="#1c1c1c" stroke="#262626" stroke-width="0.8"/>
<path d="M776.5,229.8 l8.5,8.5 M785,229.8 l-8.5,8.5" stroke="#555" stroke-width="0.9" fill="none"/>
<text x="421" y="237.2" font-size="7.5" fill="#505050">Histogram - TIE(F1)</text>
<circle cx="427.6" cy="253" r="2.7" fill="#7ac143" stroke="#6a6a6a" stroke-width="0.8"/>
<text x="434.3" y="255.7" font-size="7.4" fill="#f0f0f0">Percent</text>
<circle cx="506" cy="253" r="2.5" fill="none" stroke="#8a8a8a" stroke-width="0.9"/>
<text x="512.6" y="255.7" font-size="7.4" fill="#f0f0f0">Count</text>
<g stroke="#2f8fdd" fill="none"><circle cx="720.6" cy="251.3" r="5.8" stroke-width="1.1"/>
<path d="M724.8000000000001,255.5 l4.8,4.8" stroke-width="1.6" stroke-linecap="round"/>
<path d="M717.4,251.3 h6.4" stroke-width="1"/>
</g>
<g stroke="#2f8fdd" fill="none"><circle cx="759.8" cy="251.3" r="5.8" stroke-width="1.1"/>
<path d="M764.0,255.5 l4.8,4.8" stroke-width="1.6" stroke-linecap="round"/>
<path d="M756.5999999999999,251.3 h6.4" stroke-width="1"/>
<path d="M759.8,248.1 v6.4" stroke-width="1"/>
</g>
<path d="M458.8,278.7 V391.3 H740.5" stroke="#e8e8e8" stroke-width="1.1" fill="none"/>
<line x1="455.5" x2="458.8" y1="278.9" y2="278.9" stroke="#e8e8e8" stroke-width="0.9"/>
<text x="455" y="280.8" font-size="5.3" fill="#e2e2e2" text-anchor="end">4.0%</text>
<line x1="455.5" x2="458.8" y1="301.4" y2="301.4" stroke="#e8e8e8" stroke-width="0.9"/>
<text x="455" y="303.3" font-size="5.3" fill="#e2e2e2" text-anchor="end">3.2%</text>
<line x1="455.5" x2="458.8" y1="323.9" y2="323.9" stroke="#e8e8e8" stroke-width="0.9"/>
<text x="455" y="325.8" font-size="5.3" fill="#e2e2e2" text-anchor="end">2.4%</text>
<line x1="455.5" x2="458.8" y1="346.4" y2="346.4" stroke="#e8e8e8" stroke-width="0.9"/>
<text x="455" y="348.3" font-size="5.3" fill="#e2e2e2" text-anchor="end">1.6%</text>
<line x1="455.5" x2="458.8" y1="368.9" y2="368.9" stroke="#e8e8e8" stroke-width="0.9"/>
<text x="455" y="370.8" font-size="5.3" fill="#e2e2e2" text-anchor="end">0.8%</text>
<line x1="459.8" x2="459.8" y1="391.3" y2="396.3" stroke="#e8e8e8" stroke-width="0.9"/>
<line x1="483.1" x2="483.1" y1="391.3" y2="394.8" stroke="#e8e8e8" stroke-width="0.9"/>
<line x1="506.5" x2="506.5" y1="391.3" y2="396.3" stroke="#e8e8e8" stroke-width="0.9"/>
<line x1="529.8" x2="529.8" y1="391.3" y2="394.8" stroke="#e8e8e8" stroke-width="0.9"/>
<line x1="553.1" x2="553.1" y1="391.3" y2="396.3" stroke="#e8e8e8" stroke-width="0.9"/>
<line x1="576.5" x2="576.5" y1="391.3" y2="394.8" stroke="#e8e8e8" stroke-width="0.9"/>
<line x1="599.8" x2="599.8" y1="391.3" y2="396.3" stroke="#e8e8e8" stroke-width="0.9"/>
<line x1="623.1" x2="623.1" y1="391.3" y2="394.8" stroke="#e8e8e8" stroke-width="0.9"/>
<line x1="646.4" x2="646.4" y1="391.3" y2="396.3" stroke="#e8e8e8" stroke-width="0.9"/>
<line x1="669.8" x2="669.8" y1="391.3" y2="394.8" stroke="#e8e8e8" stroke-width="0.9"/>
<line x1="693.1" x2="693.1" y1="391.3" y2="396.3" stroke="#e8e8e8" stroke-width="0.9"/>
<line x1="716.4" x2="716.4" y1="391.3" y2="394.8" stroke="#e8e8e8" stroke-width="0.9"/>
<line x1="739.8" x2="739.8" y1="391.3" y2="396.3" stroke="#e8e8e8" stroke-width="0.9"/>
<text x="461.8" y="403.6" font-size="5.4" fill="#e2e2e2" text-anchor="middle">19.895</text>
<text x="555.1" y="403.6" font-size="5.4" fill="#e2e2e2" text-anchor="middle">19.960</text>
<text x="648.4" y="403.6" font-size="5.4" fill="#e2e2e2" text-anchor="middle">20.026</text>
<text x="741.7" y="403.6" font-size="5.4" fill="#e2e2e2" text-anchor="middle">20.092</text>
<text x="743" y="388.2" font-size="4.2" fill="#cfcfcf">Unit:</text><text x="744" y="392.6" font-size="4.2" fill="#cfcfcf">ns</text>
<path d="M460.70,389.5V391M467.70,389.4V391M472.37,389.4V391M479.36,389.4V391M481.70,389.3V391M484.03,389.3V391M486.36,389.3V391M488.70,389.2V391M491.03,389.3V391M493.36,389.3V391M495.69,389.3V391M498.03,389.2V391M500.36,389.2V391M502.69,389.1V391M505.03,388.9V391M507.36,388.7V391M509.69,388.6V391M512.03,388.3V391M514.36,388.2V391M516.69,388.0V391M519.02,387.4V391M521.36,387.0V391M523.69,386.7V391M526.02,386.0V391M528.36,385.8V391M530.69,385.3V391M533.02,384.1V391M535.36,382.7V391M537.69,381.5V391M540.02,380.3V391M542.36,379.0V391M544.69,377.8V391M547.02,375.5V391M549.35,373.3V391M551.69,371.9V391M554.02,370.0V391M556.35,367.7V391M558.69,365.6V391M561.02,362.4V391M563.35,359.6V391M565.68,356.8V391M568.02,355.4V391M570.35,351.2V391M572.68,348.5V391M575.02,345.7V391M577.35,341.4V391M579.68,340.2V391M582.02,336.5V391M584.35,331.3V391M586.68,327.2V391M589.01,324.5V391M591.35,322.0V391M593.68,317.1V391M596.01,312.6V391M598.35,313.1V391M600.68,311.9V391M603.01,313.0V391M605.35,314.3V391M607.68,312.4V391M610.01,312.7V391M612.35,312.6V391M614.68,313.9V391M617.01,313.5V391M619.34,318.6V391M621.68,318.7V391M624.01,323.6V391M626.34,327.7V391M628.68,328.5V391M631.01,334.2V391M633.34,335.8V391M635.67,339.7V391M638.01,343.3V391M640.34,347.9V391M642.67,350.1V391M645.01,353.7V391M647.34,355.1V391M649.67,358.3V391M652.01,361.5V391M654.34,364.2V391M656.67,366.7V391M659.00,368.4V391M661.34,371.2V391M663.67,373.4V391M666.00,376.1V391M668.34,377.6V391M670.67,378.9V391M673.00,379.8V391M675.34,381.2V391M677.67,382.6V391M680.00,383.6V391M682.34,384.7V391M684.67,385.2V391M687.00,385.8V391M689.33,386.2V391M691.67,386.6V391M694.00,387.2V391M696.33,387.8V391M698.67,388.2V391M701.00,388.6V391M703.33,388.7V391M705.66,388.9V391M708.00,388.9V391M710.33,389.2V391M712.66,389.2V391M715.00,389.4V391M717.33,389.4V391M719.66,389.4V391M722.00,389.4V391M724.33,389.5V391M726.66,389.5V391M729.00,389.5V391M731.33,389.4V391M733.66,389.4V391M735.99,389.5V391M738.33,389.5V391" stroke="#e0651c" stroke-width="1.4" fill="none"/>
<rect x="583.5" y="332" width="1.5" height="2" fill="#10d0d0"/>
<text x="423.5" y="415.9" font-size="7.05" fill="#d8641c">Count:50001</text>
<text x="580" y="415.9" font-size="7.05" fill="#d8641c">Cur:0.000ns</text>
<text x="423.5" y="424.4" font-size="7.05" fill="#d8641c">Top:[20.001ns,20.003ns] 3.00%</text>
</g>
</svg></body></html>
